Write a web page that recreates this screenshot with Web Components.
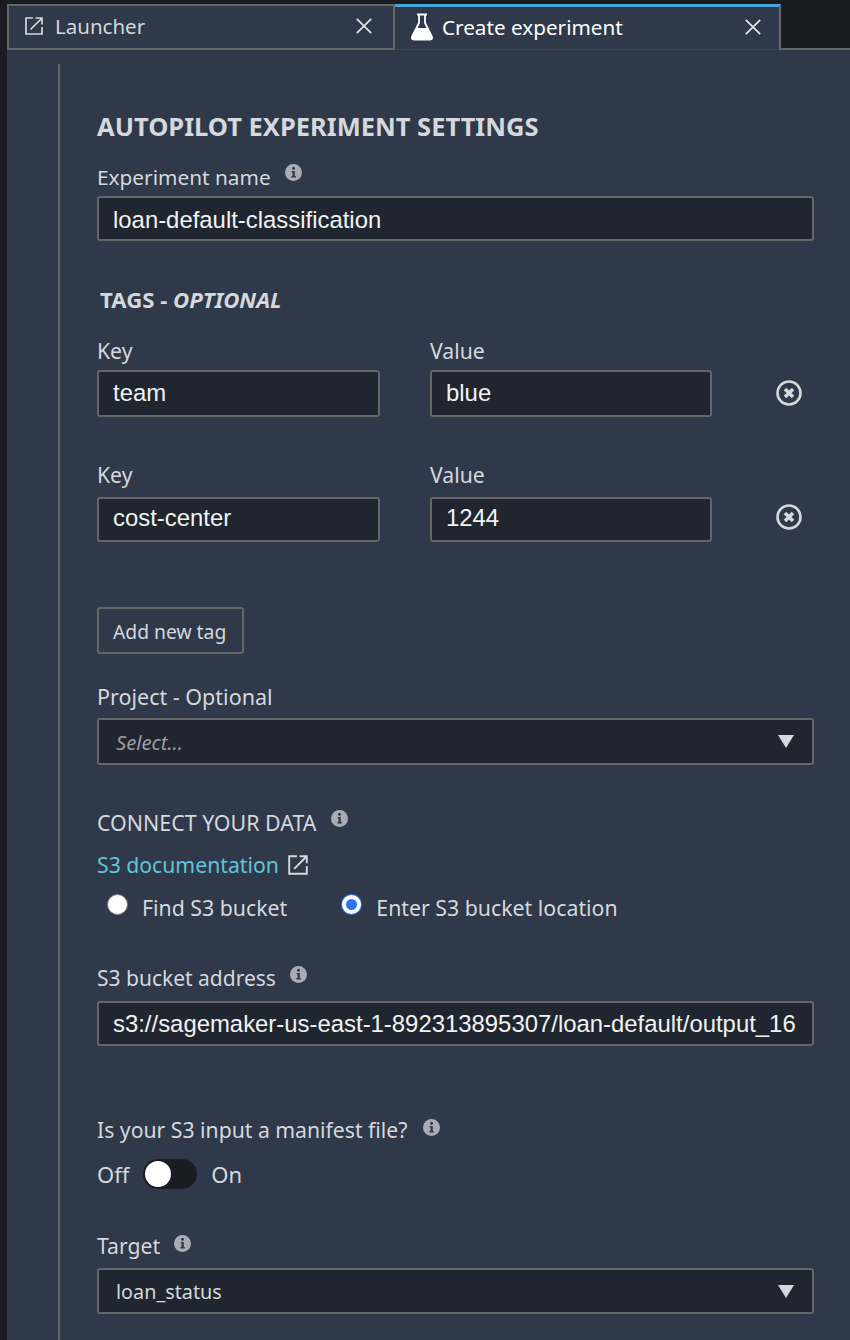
<!doctype html>
<html lang="en">
<head>
<meta charset="utf-8">
<title>Create experiment</title>
<style>
  html, body { margin: 0; background: #1a1c21; }
  body { width: 850px; height: 1340px; overflow: hidden; font-family: "Noto Sans", sans-serif; color: #d5d8dc; }
</style>
</head>
<body>
<studio-shell>
  <studio-tab slot="tabs" icon="launch" label="Launcher"></studio-tab>
  <studio-tab slot="tabs" icon="flask" label="Create experiment" active></studio-tab>

  <section-title>AUTOPILOT EXPERIMENT SETTINGS</section-title>

  <field-label info style="margin-top:20px;font-size:20.800px;--i-top:1px">Experiment name</field-label>
  <text-box style="margin-top:5px;--lh:44px">loan-default-classification</text-box>

  <tags-title style="margin-top:45px"></tags-title>

  <tag-row tag-key="team" tag-value="blue" style="margin-top:23px;--box:47px;--gap:5px;--lh:41px;--x-top:-2px"></tag-row>
  <tag-row tag-key="cost-center" tag-value="1244" style="margin-top:44px;--box:45px;--gap:8px;--lh:38px;--x-top:-5px"></tag-row>

  <plain-button style="margin-top:65px">Add new tag</plain-button>

  <field-label style="margin-top:29px;font-size:21.500px">Project - Optional</field-label>
  <select-box placeholder style="margin-top:7px;height:47px">Select...</select-box>

  <field-label info style="margin-top:44px;font-size:21.400px;--i-top:1px">CONNECT YOUR DATA</field-label>
  <docs-link style="margin-top:14px">S3 documentation</docs-link>
  <radio-group style="margin-top:15px">
    <radio-option>Find S3 bucket</radio-option>
    <radio-option checked>Enter S3 bucket location</radio-option>
  </radio-group>

  <field-label info style="margin-top:42px;font-size:21px;--i-top:2px">S3 bucket address</field-label>
  <text-box style="margin-top:9px;--lh:41px">s3://sagemaker-us-east-1-892313895307/loan-default/output_16</text-box>

  <field-label info style="margin-top:70px;--i-top:3px;--i-gap:16px">Is your S3 input a manifest file?</field-label>
  <toggle-switch style="margin-top:15px"></toggle-switch>

  <field-label info style="margin-top:43px;--i-top:3px">Target</field-label>
  <select-box style="margin-top:8px;height:46px">loan_status</select-box>
</studio-shell>

<script>
const BORDER = '#646668';
const WELL = '#20262f';
const PANEL = '#2f3949';

const ICONS = {
  launch: `<svg width="20" height="20" viewBox="0 0 20 20" fill="none" stroke="currentColor" stroke-width="1.7">
    <path d="M9 2H2v16h16v-7"/><path d="M6.5 13.5 17.5 2.5M11.5 2H18v6.5"/></svg>`,
  flask: `<svg width="24" height="28" viewBox="0 0 24 28">
    <path fill="none" stroke="currentColor" stroke-width="1.8" d="M7 1.5h10M9 2v8L2.2 23.5c-.7 1.5.1 3 1.8 3h16c1.700 0 2.500-1.500 1.800-3L15 10V2"/>
    <path fill="currentColor" d="M6.500 15h11l5 10.500c.2.800-.4 1.500-1.200 1.500H2.700c-.8 0-1.400-.7-1.200-1.500z"/></svg>`,
  close: `<svg width="16" height="16" viewBox="0 0 16 16" fill="none" stroke="currentColor" stroke-width="1.800"><path d="M.8.8l14.400 14.400M15.200.8L.8 15.200"/></svg>`,
  info: `<svg width="17" height="17" viewBox="0 0 17 17"><circle cx="8.500" cy="8.500" r="8.500" fill="#a9adb3"/>
    <circle cx="8.500" cy="4.300" r="1.500" fill="${PANEL}"/><path fill="${PANEL}" d="M6.700 6.900h3.100v5.200h1v1.300H6.400v-1.300h1.100V8.200h-.8z"/></svg>`,
  remove: `<svg width="26" height="26" viewBox="0 0 26 26" fill="none" stroke="#d5d8dc"><circle cx="13" cy="13" r="11.500" stroke-width="2.600"/>
    <path stroke-width="3.600" d="M9 9l8 8M17 9l-8 8"/></svg>`
};

// small helper so each element only has to give its css and markup
class ShadowEl extends HTMLElement {
  constructor() {
    super();
    this.attachShadow({mode: 'open'});
  }
  render(css, html) {
    this.shadowRoot.innerHTML = `<style>${css}</style>${html}`;
  }
}

customElements.define('studio-shell', class extends ShadowEl {
  connectedCallback() {
    this.render(`
      :host { display: block; height: 1340px; padding: 4px 0 0 7px; box-sizing: border-box; }
      .bar { display: flex; height: 46px; box-sizing: border-box; }
      .rest { flex: 1; border-bottom: 2px solid ${BORDER}; }
      .panel { background: ${PANEL}; height: 1290px; padding: 14px 0 0 51px; box-sizing: border-box; }
      .rail { border-left: 2px solid ${BORDER}; height: 100%; padding: 45px 36px 0 37px; box-sizing: border-box; display: flex; flex-direction: column; }
    `, `
      <div class="bar"><slot name="tabs"></slot><div class="rest"></div></div>
      <div class="panel"><div class="rail"><slot></slot></div></div>
    `);
  }
});

customElements.define('studio-tab', class extends ShadowEl {
  connectedCallback() {
    const active = this.hasAttribute('active');
    this.render(`
      :host { display: flex; align-items: center; box-sizing: border-box; height: 46px; width: ${active ? 386 : 388}px;
        background: ${PANEL}; border: 2px solid ${BORDER}; font-size: 20.500px; color: #d5d8dc; padding: 0 21px 2px 15px; }
      :host([active]) { color: #fff; border-width: 0 2px 0 0; border-top: 3px solid #46a5dc; box-shadow: inset 0 -1px #3a4453; padding: 0 18px 3px 15px; font-size: 20.700px; }
      .ico { display: flex; width: 31px; flex: none; }
      :host([active]) .ico { width: 32px; }
      .label { flex: 1; white-space: nowrap; }
      .x { display: flex; color: #dfe1e4; }
    `, `
      <span class="ico">${ICONS[this.getAttribute('icon')]}</span>
      <span class="label">${this.getAttribute('label')}</span>
      <span class="x">${ICONS.close}</span>
    `);
  }
});

customElements.define('section-title', class extends ShadowEl {
  connectedCallback() {
    this.render(`:host { display: block; font-size: 25.500px; font-weight: 700; line-height: 34px; color: #d5d8dc; white-space: nowrap; }`, `<slot></slot>`);
  }
});

customElements.define('tags-title', class extends ShadowEl {
  connectedCallback() {
    this.render(`:host { display: block; font-size: 22.200px; font-weight: 700; line-height: 28px; padding-left: 3px; color: #d5d8dc; } i { font-weight: 700; }`, `TAGS - <i>OPTIONAL</i>`);
  }
});

customElements.define('field-label', class extends ShadowEl {
  connectedCallback() {
    this.render(`
      :host { display: flex; gap: var(--i-gap, 14px); font-size: 21.200px; line-height: 28px; color: #d5d8dc; white-space: nowrap; }
      .i { display: flex; height: 17px; margin-top: var(--i-top, 0); }
    `, `<slot></slot>${this.hasAttribute('info') ? `<span class="i">${ICONS.info}</span>` : ''}`);
  }
});

customElements.define('text-box', class extends ShadowEl {
  connectedCallback() {
    this.render(`
      :host { display: block; box-sizing: border-box; height: var(--box, 45px); background: ${WELL}; border: 2px solid ${BORDER}; border-radius: 3px;
        padding: 0 14px; font: 23.900px/var(--lh, 40px) "Liberation Sans", sans-serif; color: #f1f2f3; white-space: nowrap; overflow: hidden; }
    `, `<slot></slot>`);
  }
});

customElements.define('select-box', class extends ShadowEl {
  connectedCallback() {
    this.render(`
      :host { display: flex; align-items: center; justify-content: space-between; box-sizing: border-box; height: 46px; background: ${WELL};
        border: 2px solid ${BORDER}; border-radius: 3px; padding: 0 18px 0 17px; font-size: 19.800px; color: #d5d8dc; }
      :host([placeholder]) { font-style: italic; color: #9a9da3; font-size: 20.200px; }
      .arrow { width: 0; height: 0; border-style: solid; border-width: 13px 8.500px 0; border-color: #d5d8dc transparent transparent; }
    `, `<span><slot></slot></span><span class="arrow"></span>`);
  }
});

customElements.define('tag-row', class extends ShadowEl {
  connectedCallback() {
    this.render(`
      :host { display: grid; grid-template-columns: 283px 282px 40px; column-gap: 50px; row-gap: var(--gap, 6px); font-size: 21.200px; line-height: 28px; color: #d5d8dc; }
      .x { display: flex; align-self: center; padding-left: 14px; margin-top: var(--x-top, 0); }
      svg { flex: none; }
    `, `
      <span>Key</span><span>Value</span><span></span>
      <text-box>${this.getAttribute('tag-key')}</text-box>
      <text-box>${this.getAttribute('tag-value')}</text-box>
      <span class="x">${ICONS.remove}</span>
    `);
  }
});

customElements.define('plain-button', class extends ShadowEl {
  connectedCallback() {
    this.render(`
      :host { display: block; align-self: flex-start; box-sizing: border-box; height: 47px; padding: 0 16px 0 14px; border: 2px solid ${BORDER}; border-radius: 3px;
        font-size: 19.300px; line-height: 46px; color: #d5d8dc; }
    `, `<slot></slot>`);
  }
});

customElements.define('docs-link', class extends ShadowEl {
  connectedCallback() {
    this.render(`
      :host { display: flex; align-items: center; gap: 8px; font-size: 21.200px; line-height: 28px; color: #60c5d9; }
      span { display: flex; color: #d5d8dc; }
      svg { width: 22px; height: 22px; }
    `, `<slot></slot><span>${ICONS.launch}</span>`);
  }
});

customElements.define('radio-group', class extends ShadowEl {
  connectedCallback() {
    this.render(`:host { display: flex; gap: 54px; padding-left: 10px; }`, `<slot></slot>`);
  }
});

customElements.define('radio-option', class extends ShadowEl {
  connectedCallback() {
    this.render(`
      :host { display: flex; gap: 14px; font-size: 21.300px; line-height: 28px; color: #d5d8dc; white-space: nowrap; }
      .dot { width: 21px; height: 21px; box-sizing: border-box; border-radius: 50%; background: #fff; border: 1.500px solid #77797c; margin-top: 0; }
      :host([checked]) .dot { background: #2d74f0; border: 4px solid #fff; box-shadow: 0 0 0 1px #2d74f0; width: 19px; height: 19px; margin: 1px; }
    `, `<span class="dot"></span><span class="t"><slot></slot></span>`);
  }
});

customElements.define('toggle-switch', class extends ShadowEl {
  connectedCallback() {
    this.render(`
      :host { display: flex; align-items: center; gap: 14px; font-size: 22px; line-height: 28px; color: #d5d8dc; }
      .track { display: flex; align-items: center; width: 54px; height: 30px; padding: 0 2px; box-sizing: border-box; border-radius: 15px; background: #1a1c21; }
      .knob { width: 26px; height: 26px; border-radius: 50%; background: #fff; }
    `, `<span>Off</span><span class="track"><span class="knob"></span></span><span>On</span>`);
  }
});
</script>
</body>
</html>
